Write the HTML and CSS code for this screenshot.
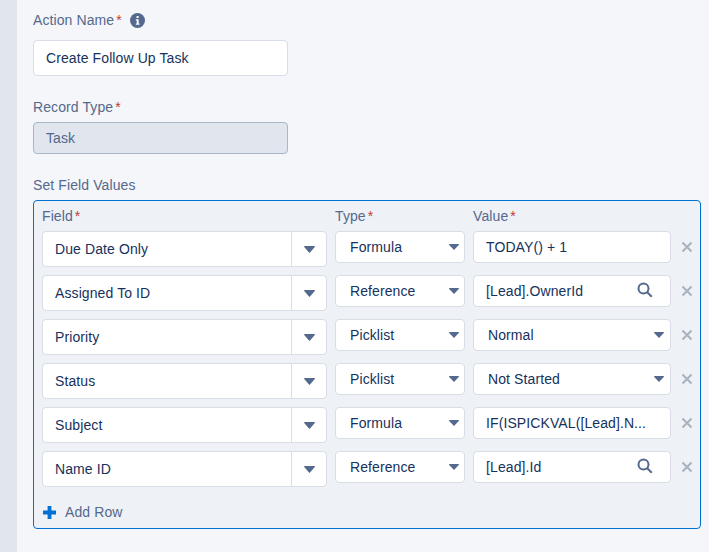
FILE: index.html
```html
<!DOCTYPE html>
<html lang="en">
<head>
<meta charset="utf-8">
<title>Create Follow Up Task</title>
<link rel="stylesheet" href="styles.css">
</head>
<body>
<div class="page">
  <aside class="rail"></aside>
  <main class="main">
    <div class="label label-first">Action Name<span class="req">*</span>
      <svg class="info" viewBox="0 0 16 16"><circle cx="8" cy="8" r="8" fill="#54698d"/><rect x="7" y="3.2" width="2.2" height="2.2" rx=".4" fill="#fff"/><path d="M6.2 6.6h3v4.6h.9v1.3H6.2v-1.3h1V7.9h-1z" fill="#fff"/></svg>
    </div>
    <div class="box input-name">Create Follow Up Task</div>
    <div class="label label-record">Record Type<span class="req">*</span></div>
    <div class="box input-disabled">Task</div>
    <div class="label label-set">Set Field Values</div>
    <section class="panel">
      <div class="grid head">
        <div class="label-small">Field<span class="req">*</span></div>
        <div class="label-small">Type<span class="req">*</span></div>
        <div class="label-small">Value<span class="req">*</span></div>
      </div>

      <div class="grid row">
        <div class="box combo"><span class="combo-text">Due Date Only</span><span class="combo-btn"><svg class="tri" viewBox="0 0 11 7"><path d="M.8 0h9.4c.7 0 1 .6.6 1.1L6 6.6c-.3.4-.7.4-1 0L.2 1.1C-.2.6.1 0 .8 0z"/></svg></span></div>
        <div class="box sel"><span>Formula</span><svg class="tri-sm" viewBox="0 0 10 6"><path d="M.7 0h8.6c.6 0 .9.5.5 1L5.5 5.6c-.3.4-.7.4-1 0L.2 1C-.2.5.1 0 .7 0z"/></svg></div>
        <div class="box val">TODAY() + 1</div>
        <svg class="close" viewBox="0 0 12 12"><path d="M1.5 1.5l9 9M10.5 1.5l-9 9"/></svg>
      </div>

      <div class="grid row">
        <div class="box combo"><span class="combo-text">Assigned To ID</span><span class="combo-btn"><svg class="tri" viewBox="0 0 11 7"><path d="M.8 0h9.4c.7 0 1 .6.6 1.1L6 6.6c-.3.4-.7.4-1 0L.2 1.1C-.2.6.1 0 .8 0z"/></svg></span></div>
        <div class="box sel"><span>Reference</span><svg class="tri-sm" viewBox="0 0 10 6"><path d="M.7 0h8.6c.6 0 .9.5.5 1L5.5 5.6c-.3.4-.7.4-1 0L.2 1C-.2.5.1 0 .7 0z"/></svg></div>
        <div class="box val lookup"><span>[Lead].OwnerId</span><svg class="search" viewBox="0 0 16 16"><circle cx="6.5" cy="6.5" r="5" /><path d="M10.2 10.2l4.6 4.6"/></svg></div>
        <svg class="close" viewBox="0 0 12 12"><path d="M1.5 1.5l9 9M10.5 1.5l-9 9"/></svg>
      </div>

      <div class="grid row">
        <div class="box combo"><span class="combo-text">Priority</span><span class="combo-btn"><svg class="tri" viewBox="0 0 11 7"><path d="M.8 0h9.4c.7 0 1 .6.6 1.1L6 6.6c-.3.4-.7.4-1 0L.2 1.1C-.2.6.1 0 .8 0z"/></svg></span></div>
        <div class="box sel"><span>Picklist</span><svg class="tri-sm" viewBox="0 0 10 6"><path d="M.7 0h8.6c.6 0 .9.5.5 1L5.5 5.6c-.3.4-.7.4-1 0L.2 1C-.2.5.1 0 .7 0z"/></svg></div>
        <div class="box sel sel-val"><span>Normal</span><svg class="tri-sm" viewBox="0 0 10 6"><path d="M.7 0h8.6c.6 0 .9.5.5 1L5.5 5.6c-.3.4-.7.4-1 0L.2 1C-.2.5.1 0 .7 0z"/></svg></div>
        <svg class="close" viewBox="0 0 12 12"><path d="M1.5 1.5l9 9M10.5 1.5l-9 9"/></svg>
      </div>

      <div class="grid row">
        <div class="box combo"><span class="combo-text">Status</span><span class="combo-btn"><svg class="tri" viewBox="0 0 11 7"><path d="M.8 0h9.4c.7 0 1 .6.6 1.1L6 6.6c-.3.4-.7.4-1 0L.2 1.1C-.2.6.1 0 .8 0z"/></svg></span></div>
        <div class="box sel"><span>Picklist</span><svg class="tri-sm" viewBox="0 0 10 6"><path d="M.7 0h8.6c.6 0 .9.5.5 1L5.5 5.6c-.3.4-.7.4-1 0L.2 1C-.2.5.1 0 .7 0z"/></svg></div>
        <div class="box sel sel-val"><span>Not Started</span><svg class="tri-sm" viewBox="0 0 10 6"><path d="M.7 0h8.6c.6 0 .9.5.5 1L5.5 5.6c-.3.4-.7.4-1 0L.2 1C-.2.5.1 0 .7 0z"/></svg></div>
        <svg class="close" viewBox="0 0 12 12"><path d="M1.5 1.5l9 9M10.5 1.5l-9 9"/></svg>
      </div>

      <div class="grid row">
        <div class="box combo"><span class="combo-text">Subject</span><span class="combo-btn"><svg class="tri" viewBox="0 0 11 7"><path d="M.8 0h9.4c.7 0 1 .6.6 1.1L6 6.6c-.3.4-.7.4-1 0L.2 1.1C-.2.6.1 0 .8 0z"/></svg></span></div>
        <div class="box sel"><span>Formula</span><svg class="tri-sm" viewBox="0 0 10 6"><path d="M.7 0h8.6c.6 0 .9.5.5 1L5.5 5.6c-.3.4-.7.4-1 0L.2 1C-.2.5.1 0 .7 0z"/></svg></div>
        <div class="box val">IF(ISPICKVAL([Lead].N...</div>
        <svg class="close" viewBox="0 0 12 12"><path d="M1.5 1.5l9 9M10.5 1.5l-9 9"/></svg>
      </div>

      <div class="grid row">
        <div class="box combo"><span class="combo-text">Name ID</span><span class="combo-btn"><svg class="tri" viewBox="0 0 11 7"><path d="M.8 0h9.4c.7 0 1 .6.6 1.1L6 6.6c-.3.4-.7.4-1 0L.2 1.1C-.2.6.1 0 .8 0z"/></svg></span></div>
        <div class="box sel"><span>Reference</span><svg class="tri-sm" viewBox="0 0 10 6"><path d="M.7 0h8.6c.6 0 .9.5.5 1L5.5 5.6c-.3.4-.7.4-1 0L.2 1C-.2.5.1 0 .7 0z"/></svg></div>
        <div class="box val lookup"><span>[Lead].Id</span><svg class="search" viewBox="0 0 16 16"><circle cx="6.5" cy="6.5" r="5" /><path d="M10.2 10.2l4.6 4.6"/></svg></div>
        <svg class="close" viewBox="0 0 12 12"><path d="M1.5 1.5l9 9M10.5 1.5l-9 9"/></svg>
      </div>

      <div class="add"><svg class="plus" viewBox="0 0 13 13"><path d="M4.6 0h3.8v4.6H13v3.8H8.400V13H4.600V8.400H0V4.600h4.600z"/></svg><span>Add Row</span></div>
    </section>
  </main>
</div>
</body>
</html>
```
FILE: styles.css
```css
* { box-sizing: border-box; }
html, body { margin: 0; height: 100%; }
body {
  background: #f4f6f9;
  font-family: "Liberation Sans", Arial, sans-serif;
  font-size: 14px;
  letter-spacing: .1px;
  color: #16325c;
  overflow: hidden;
}
.page { display: flex; min-height: 552px; }
.rail { width: 17px; flex: none; background: #e0e5ee; }
.main { flex: 1; padding-left: 16px; padding-right: 8px; }

.label { font-size: 14px; line-height: 18px; color: #54698d; display: flex; align-items: center; }
.label-first { margin-top: 11px; margin-bottom: 11px; }
.label-record { margin-top: 22px; margin-bottom: 6px; }
.label-set { margin-top: 22px; margin-bottom: 6px; }
.req { color: #c23934; margin-left: 2px; }
.info { width: 15px; height: 15px; margin-left: 8px; }

.box {
  background: #fff;
  border: 1px solid #d8dde6;
  border-radius: 4px;
  display: flex;
  align-items: center;
}
.input-name { width: 255px; height: 36px; padding-left: 12px; }
.input-disabled { width: 255px; height: 32px; padding-left: 12px; background: #e0e5ee; border-color: #a8b7c7; color: #54698d; }

.panel {
  width: 668px;
  height: 329px;
  border: 1px solid #0070d2;
  border-radius: 4px;
  background: #eef1f6;
  padding: 6px 8px 0;
}
.grid { display: grid; grid-template-columns: 285px 130px 198px 16px; column-gap: 8px; align-items: start; }
.head { height: 18px; margin-bottom: 6px; }
.label-small { font-size: 14px; line-height: 18px; color: #54698d; }
.row { margin-bottom: 8px; height: 36px; }
.row:last-of-type { margin-bottom: 0; }

.combo { height: 36px; }
.combo-text { flex: 1; padding-left: 12px; }
.combo-btn { width: 35px; height: 34px; border-left: 1px solid #d8dde6; display: flex; align-items: center; justify-content: center; }
.tri { width: 11px; height: 7px; fill: #54698d; }

.sel { height: 32px; justify-content: space-between; padding-left: 14px; padding-right: 5px; }
.sel-val { padding-right: 6px; }
.tri-sm { width: 10px; height: 6px; fill: #54698d; }
.val { height: 32px; padding-left: 12px; padding-right: 17px; }
.lookup { justify-content: space-between; }
.search { width: 16px; height: 16px; fill: none; stroke: #54698d; stroke-width: 2; margin-top: -3px; }

.close { width: 12px; height: 12px; margin: 10px 0 0 2px; fill: none; stroke: #a8b2c0; stroke-width: 2; }

.add { display: flex; align-items: center; margin-top: 17px; color: #54698d; }
.plus { width: 13px; height: 13px; fill: #0070d2; margin-left: 1px; margin-right: 9px; }
```
